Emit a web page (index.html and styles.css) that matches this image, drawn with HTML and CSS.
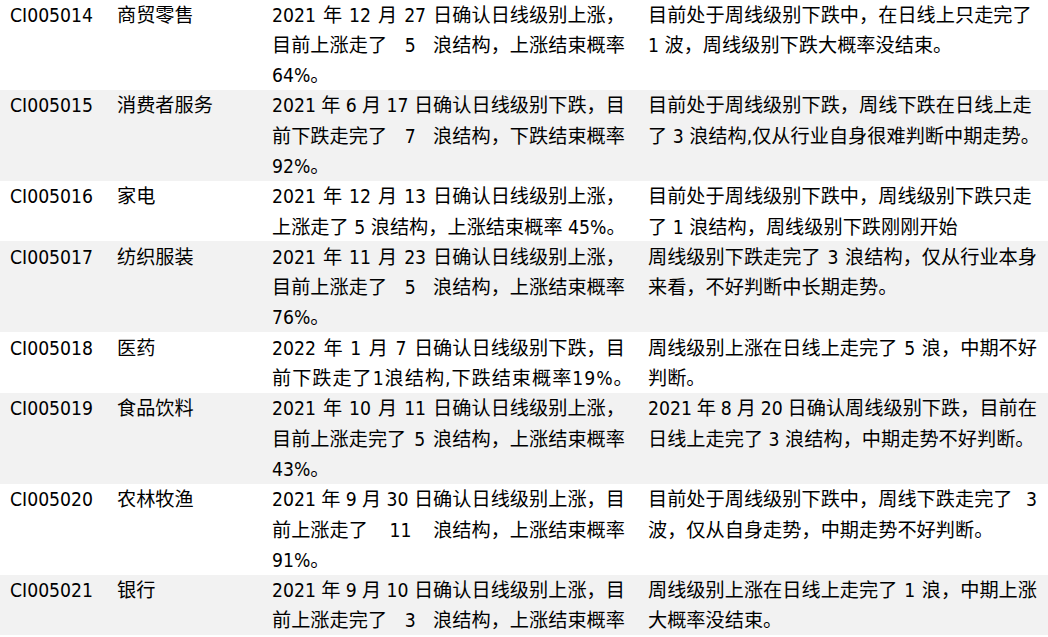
FILE: index.html
```html
<!DOCTYPE html>
<html lang="zh-CN">
<head>
<meta charset="utf-8">
<title>行业走势</title>
<link rel="stylesheet" href="styles.css">
</head>
<body>
<div class="table">
  <div class="row">
    <div class="code">CI005014</div>
    <div class="name">商贸零售</div>
    <div class="c3">
      <div class="ln j"><span>2021</span><span>年</span><span>12</span><span>月</span><span>27</span><span>日确认日线级别上涨，</span></div>
      <div class="ln j"><span>目前上涨走了</span><span>5</span><span>浪结构，上涨结束概率</span></div>
      <div class="ln">64%。</div>
    </div>
    <div class="c4">
      <div class="ln">目前处于周线级别下跌中，在日线上只走完了</div>
      <div class="ln">1 波，周线级别下跌大概率没结束。</div>
    </div>
  </div>
  <div class="row">
    <div class="code">CI005015</div>
    <div class="name">消费者服务</div>
    <div class="c3">
      <div class="ln j"><span>2021</span><span>年</span><span>6</span><span>月</span><span>17</span><span>日确认日线级别下跌，目</span></div>
      <div class="ln j"><span>前下跌走完了</span><span>7</span><span>浪结构，下跌结束概率</span></div>
      <div class="ln">92%。</div>
    </div>
    <div class="c4">
      <div class="ln">目前处于周线级别下跌，周线下跌在日线上走</div>
      <div class="ln">了 3 浪结构,仅从行业自身很难判断中期走势。</div>
    </div>
  </div>
  <div class="row">
    <div class="code">CI005016</div>
    <div class="name">家电</div>
    <div class="c3">
      <div class="ln j"><span>2021</span><span>年</span><span>12</span><span>月</span><span>13</span><span>日确认日线级别上涨，</span></div>
      <div class="ln">上涨走了 5 浪结构，上涨结束概率 45%。</div>
    </div>
    <div class="c4">
      <div class="ln">目前处于周线级别下跌中，周线级别下跌只走</div>
      <div class="ln">了 1 浪结构，周线级别下跌刚刚开始</div>
    </div>
  </div>
  <div class="row">
    <div class="code">CI005017</div>
    <div class="name">纺织服装</div>
    <div class="c3">
      <div class="ln j"><span>2021</span><span>年</span><span>11</span><span>月</span><span>23</span><span>日确认日线级别上涨，</span></div>
      <div class="ln j"><span>目前上涨走了</span><span>5</span><span>浪结构，上涨结束概率</span></div>
      <div class="ln">76%。</div>
    </div>
    <div class="c4">
      <div class="ln j"><span>周线级别下跌走完了</span><span>3</span><span>浪结构，仅从行业本身</span></div>
      <div class="ln">来看，不好判断中长期走势。</div>
    </div>
  </div>
  <div class="row">
    <div class="code">CI005018</div>
    <div class="name">医药</div>
    <div class="c3">
      <div class="ln j"><span>2022</span><span>年</span><span>1</span><span>月</span><span>7</span><span>日确认日线级别下跌，目</span></div>
      <div class="ln spread">前下跌走了1浪结构,下跌结束概率19%。</div>
    </div>
    <div class="c4">
      <div class="ln j"><span>周线级别上涨在日线上走完了</span><span>5</span><span>浪，中期不好</span></div>
      <div class="ln">判断。</div>
    </div>
  </div>
  <div class="row">
    <div class="code">CI005019</div>
    <div class="name">食品饮料</div>
    <div class="c3">
      <div class="ln j"><span>2021</span><span>年</span><span>10</span><span>月</span><span>11</span><span>日确认日线级别上涨，</span></div>
      <div class="ln j"><span>目前上涨走完了</span><span>5</span><span>浪结构，上涨结束概率</span></div>
      <div class="ln">43%。</div>
    </div>
    <div class="c4">
      <div class="ln j"><span>2021</span><span>年</span><span>8</span><span>月</span><span>20</span><span>日确认周线级别下跌，目前在</span></div>
      <div class="ln">日线上走完了 3 浪结构，中期走势不好判断。</div>
    </div>
  </div>
  <div class="row">
    <div class="code">CI005020</div>
    <div class="name">农林牧渔</div>
    <div class="c3">
      <div class="ln j"><span>2021</span><span>年</span><span>9</span><span>月</span><span>30</span><span>日确认日线级别上涨，目</span></div>
      <div class="ln j"><span>前上涨走了</span><span>11</span><span>浪结构，上涨结束概率</span></div>
      <div class="ln">91%。</div>
    </div>
    <div class="c4">
      <div class="ln j"><span>目前处于周线级别下跌中，周线下跌走完了</span><span>3</span></div>
      <div class="ln">波，仅从自身走势，中期走势不好判断。</div>
    </div>
  </div>
  <div class="row">
    <div class="code">CI005021</div>
    <div class="name">银行</div>
    <div class="c3">
      <div class="ln j"><span>2021</span><span>年</span><span>9</span><span>月</span><span>10</span><span>日确认日线级别上涨，目</span></div>
      <div class="ln j"><span>前上涨走完了</span><span>3</span><span>浪结构，上涨结束概率</span></div>
    </div>
    <div class="c4">
      <div class="ln j"><span>周线级别上涨在日线上走完了</span><span>1</span><span>浪，中期上涨</span></div>
      <div class="ln">大概率没结束。</div>
    </div>
  </div>
</div>
</body>
</html>
```
FILE: styles.css
```css
html, body {
  margin: 0;
  padding: 0;
  overflow: hidden;
  background: #ffffff;
}

body {
  font-family: "DejaVu Sans Condensed", "Liberation Sans", "Noto Sans CJK SC", sans-serif;
  font-size: 19.2px;
  line-height: 30.3px;
  color: #000000;
}

.table {
  margin-top: -1px;
}

.row {
  display: grid;
  grid-template-columns: 107px 155px 376px 1fr;
  padding-left: 10px;
  background: #ffffff;
}

.row:nth-child(even) {
  background: #f2f2f2;
}

/* nudge the text slightly lower inside each row without changing row height */
.code,
.name,
.c3,
.c4 {
  padding-top: 1.5px;
  margin-bottom: -1.5px;
}

.code,
.name {
  white-space: nowrap;
}

.c3 .ln {
  width: 353px;
}

.c4 .ln {
  width: 389px;
}

.ln {
  white-space: nowrap;
}

.j {
  display: flex;
  justify-content: space-between;
  gap: 3px;
}

.spread {
  letter-spacing: 0.95px;
}
```
